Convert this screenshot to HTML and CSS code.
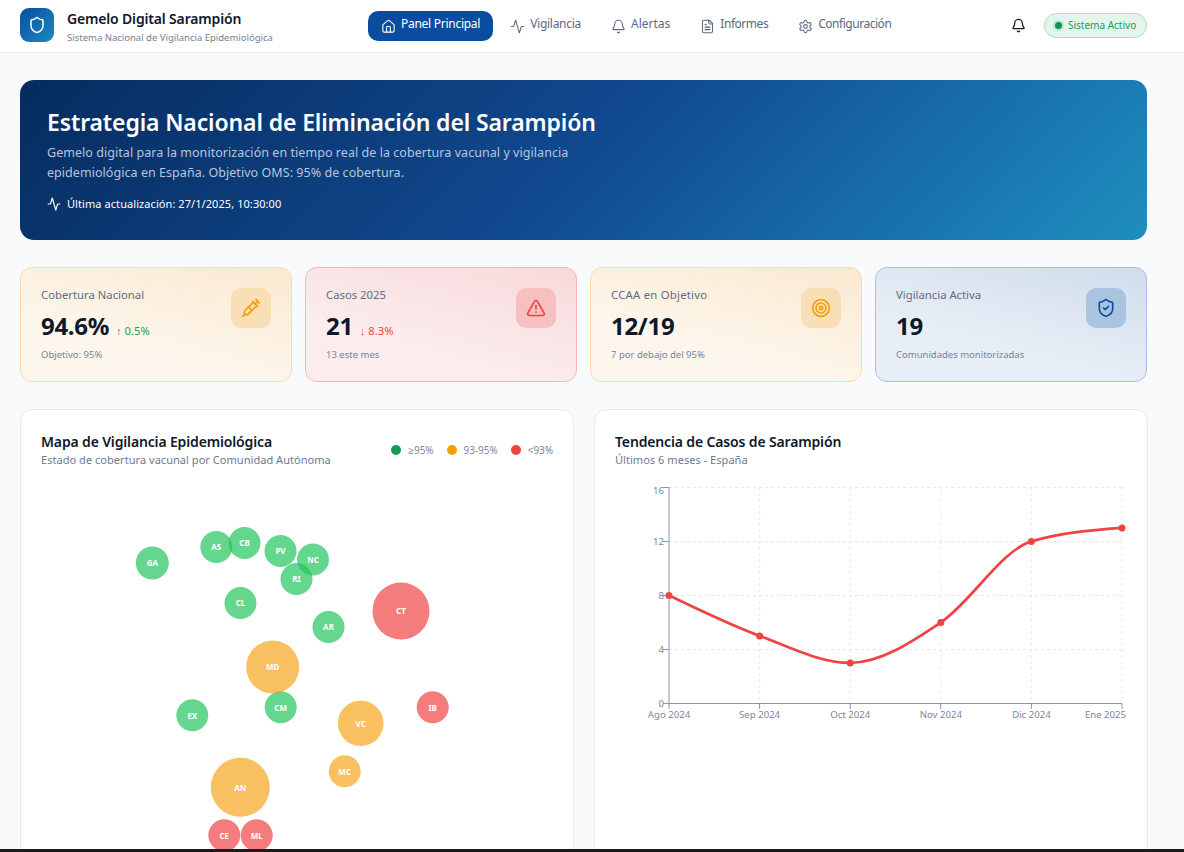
FILE: index.html
```html
<!DOCTYPE html>
<html lang="es">
<head>
<meta charset="utf-8">
<title>Gemelo Digital Sarampión</title>
<link rel="stylesheet" href="styles.css">
</head>
<body>
<div class="app">
  <header class="topbar">
    <div class="brand">
      <div class="logo">
        <svg class="ico ico-18" viewBox="0 0 24 24"><path d="M20 13c0 5-3.5 7.5-7.66 8.95a1 1 0 0 1-.67-.01C7.5 20.5 4 18 4 13V6a1 1 0 0 1 1-1c2 0 4.5-1.2 6.24-2.72a1.17 1.17 0 0 1 1.52 0C14.51 3.81 17 5 19 5a1 1 0 0 1 1 1z"/></svg>
      </div>
      <div class="brand-text">
        <div class="brand-title">Gemelo Digital Sarampión</div>
        <div class="brand-sub">Sistema Nacional de Vigilancia Epidemiológica</div>
      </div>
    </div>
    <nav class="nav">
      <a class="nav-item active">
        <svg class="ico ico-15" viewBox="0 0 24 24"><path d="M15 21v-8a1 1 0 0 0-1-1h-4a1 1 0 0 0-1 1v8"/><path d="M3 10a2 2 0 0 1 .709-1.528l7-5.999a2 2 0 0 1 2.582 0l7 5.999A2 2 0 0 1 21 10v9a2 2 0 0 1-2 2H5a2 2 0 0 1-2-2z"/></svg>
        <span>Panel Principal</span>
      </a>
      <a class="nav-item">
        <svg class="ico ico-15" viewBox="0 0 24 24"><path d="M22 12h-2.48a2 2 0 0 0-1.93 1.46l-2.35 8.36a.25.25 0 0 1-.48 0L9.24 2.18a.25.25 0 0 0-.48 0l-2.35 8.36A2 2 0 0 1 4.49 12H2"/></svg>
        <span>Vigilancia</span>
      </a>
      <a class="nav-item nav-wide">
        <svg class="ico ico-15" viewBox="0 0 24 24"><path d="M10.268 21a2 2 0 0 0 3.464 0"/><path d="M3.262 15.326A1 1 0 0 0 4 17h16a1 1 0 0 0 .74-1.673C19.41 13.956 18 12.499 18 8A6 6 0 0 0 6 8c0 4.499-1.411 5.956-2.738 7.326"/></svg>
        <span>Alertas</span>
      </a>
      <a class="nav-item nav-tight">
        <svg class="ico ico-15" viewBox="0 0 24 24"><path d="M15 2H6a2 2 0 0 0-2 2v16a2 2 0 0 0 2 2h12a2 2 0 0 0 2-2V7Z"/><path d="M14 2v4a2 2 0 0 0 2 2h4"/><path d="M10 9H8"/><path d="M16 13H8"/><path d="M16 17H8"/></svg>
        <span>Informes</span>
      </a>
      <a class="nav-item nav-tight">
        <svg class="ico ico-15" viewBox="0 0 24 24"><path d="M12.22 2h-.44a2 2 0 0 0-2 2v.18a2 2 0 0 1-1 1.73l-.43.25a2 2 0 0 1-2 0l-.15-.08a2 2 0 0 0-2.73.73l-.22.38a2 2 0 0 0 .73 2.73l.15.1a2 2 0 0 1 1 1.72v.51a2 2 0 0 1-1 1.74l-.15.09a2 2 0 0 0-.73 2.73l.22.38a2 2 0 0 0 2.73.73l.15-.08a2 2 0 0 1 2 0l.43.25a2 2 0 0 1 1 1.73V20a2 2 0 0 0 2 2h.44a2 2 0 0 0 2-2v-.18a2 2 0 0 1 1-1.73l.43-.25a2 2 0 0 1 2 0l.15.08a2 2 0 0 0 2.73-.73l.22-.39a2 2 0 0 0-.73-2.73l-.15-.08a2 2 0 0 1-1-1.74v-.5a2 2 0 0 1 1-1.74l.15-.09a2 2 0 0 0 .73-2.73l-.22-.38a2 2 0 0 0-2.73-.73l-.15.08a2 2 0 0 1-2 0l-.43-.25a2 2 0 0 1-1-1.73V4a2 2 0 0 0-2-2z"/><circle cx="12" cy="12" r="3"/></svg>
        <span>Configuración</span>
      </a>
    </nav>
    <div class="top-actions">
      <svg class="ico ico-15 bell" viewBox="0 0 24 24"><path d="M10.268 21a2 2 0 0 0 3.464 0"/><path d="M3.262 15.326A1 1 0 0 0 4 17h16a1 1 0 0 0 .74-1.673C19.41 13.956 18 12.499 18 8A6 6 0 0 0 6 8c0 4.499-1.411 5.956-2.738 7.326"/></svg>
      <div class="status"><span class="status-dot"></span><span>Sistema Activo</span></div>
    </div>
  </header>

  <main class="main">
    <section class="hero">
      <h1 class="hero-title">Estrategia Nacional de Eliminación del Sarampión</h1>
      <p class="hero-text">Gemelo digital para la monitorización en tiempo real de la cobertura vacunal y vigilancia epidemiológica en España. Objetivo OMS: 95% de cobertura.</p>
      <div class="hero-update">
        <svg class="ico ico-14" viewBox="0 0 24 24"><path d="M22 12h-2.48a2 2 0 0 0-1.93 1.46l-2.35 8.36a.25.25 0 0 1-.48 0L9.24 2.18a.25.25 0 0 0-.48 0l-2.35 8.36A2 2 0 0 1 4.49 12H2"/></svg>
        <span>Última actualización: 27/1/2025, 10:30:00</span>
      </div>
    </section>

    <section class="stats">
      <article class="stat stat-orange">
        <div class="stat-body">
          <div class="stat-label">Cobertura Nacional</div>
          <div class="stat-value-row"><span class="stat-value">94.6%</span><span class="delta delta-up">↑ 0.5%</span></div>
          <div class="stat-note">Objetivo: 95%</div>
        </div>
        <div class="stat-icon"><svg class="ico ico-20" viewBox="0 0 24 24"><path d="m18 2 4 4"/><path d="m17 7 3-3"/><path d="M19 9 8.7 19.3c-1 1-2.5 1-3.4 0l-.6-.6c-1-1-1-2.5 0-3.4L15 5"/><path d="m9 11 4 4"/><path d="m5 19-3 3"/><path d="m14 4 6 6"/></svg></div>
      </article>
      <article class="stat stat-red">
        <div class="stat-body">
          <div class="stat-label">Casos 2025</div>
          <div class="stat-value-row"><span class="stat-value">21</span><span class="delta delta-down">↓ 8.3%</span></div>
          <div class="stat-note">13 este mes</div>
        </div>
        <div class="stat-icon"><svg class="ico ico-20" viewBox="0 0 24 24"><path d="m21.73 18-8-14a2 2 0 0 0-3.48 0l-8 14A2 2 0 0 0 4 21h16a2 2 0 0 0 1.73-3"/><path d="M12 9v4"/><path d="M12 17h.01"/></svg></div>
      </article>
      <article class="stat stat-orange">
        <div class="stat-body">
          <div class="stat-label stat-label-wide">CCAA en Objetivo</div>
          <div class="stat-value-row"><span class="stat-value">12/19</span></div>
          <div class="stat-note">7 por debajo del 95%</div>
        </div>
        <div class="stat-icon"><svg class="ico ico-20" viewBox="0 0 24 24"><circle cx="12" cy="12" r="10"/><circle cx="12" cy="12" r="6"/><circle cx="12" cy="12" r="2"/></svg></div>
      </article>
      <article class="stat stat-blue">
        <div class="stat-body">
          <div class="stat-label">Vigilancia Activa</div>
          <div class="stat-value-row"><span class="stat-value">19</span></div>
          <div class="stat-note">Comunidades monitorizadas</div>
        </div>
        <div class="stat-icon"><svg class="ico ico-20" viewBox="0 0 24 24"><path d="M20 13c0 5-3.5 7.5-7.66 8.95a1 1 0 0 1-.67-.01C7.5 20.5 4 18 4 13V6a1 1 0 0 1 1-1c2 0 4.5-1.2 6.24-2.72a1.17 1.17 0 0 1 1.52 0C14.51 3.81 17 5 19 5a1 1 0 0 1 1 1z"/><path d="m9 12 2 2 4-4"/></svg></div>
      </article>
    </section>

    <section class="panels">
      <article class="panel">
        <div class="panel-head">
          <div>
            <h2 class="panel-title">Mapa de Vigilancia Epidemiológica</h2>
            <p class="panel-sub">Estado de cobertura vacunal por Comunidad Autónoma</p>
          </div>
          <div class="legend">
            <span class="legend-item"><i class="dot dot-green"></i>≥95%</span>
            <span class="legend-item"><i class="dot dot-orange"></i>93-95%</span>
            <span class="legend-item"><i class="dot dot-red"></i>&lt;93%</span>
          </div>
        </div>
        <svg class="map" viewBox="41 480 512 380" width="512" height="380">
          <g class="b-green">
            <circle cx="152.3" cy="563" r="16.5"/><circle cx="216.3" cy="547" r="16"/><circle cx="244.5" cy="543" r="16"/><circle cx="280.5" cy="551" r="16"/><circle cx="313" cy="559.5" r="16"/><circle cx="296.5" cy="579" r="16"/><circle cx="240.5" cy="603" r="16"/><circle cx="328.5" cy="627" r="16"/><circle cx="280.7" cy="707.3" r="16"/><circle cx="192.3" cy="715.3" r="16"/>
          </g>
          <g class="b-orange">
            <circle cx="272.7" cy="667" r="26.5"/><circle cx="360.7" cy="723.3" r="22.8"/><circle cx="344.7" cy="771.3" r="16"/><circle cx="240.3" cy="787.3" r="29.5"/>
          </g>
          <g class="b-red">
            <circle cx="401" cy="611" r="28.5"/><circle cx="432.7" cy="707.3" r="16"/><circle cx="224.3" cy="835.3" r="16"/><circle cx="256.7" cy="835.3" r="16"/>
          </g>
          <g class="b-labels">
            <text x="152.3" y="566">GA</text><text x="216.3" y="550">AS</text><text x="244.5" y="546">CB</text><text x="280.5" y="554">PV</text><text x="313" y="562.5">NC</text><text x="296.5" y="582">RI</text><text x="240.5" y="606">CL</text><text x="328.5" y="630">AR</text><text x="401" y="614">CT</text><text x="272.7" y="670">MD</text><text x="280.7" y="711">CM</text><text x="192.3" y="719">EX</text><text x="360.7" y="727">VC</text><text x="432.7" y="711">IB</text><text x="344.7" y="775">MC</text><text x="240.3" y="791">AN</text><text x="224.3" y="839">CE</text><text x="256.7" y="839">ML</text>
          </g>
        </svg>
      </article>
      <article class="panel">
        <div class="panel-head">
          <div>
            <h2 class="panel-title">Tendencia de Casos de Sarampión</h2>
            <p class="panel-sub">Últimos 6 meses - España</p>
          </div>
        </div>
        <svg class="chart" viewBox="615 480 512 380" width="512" height="380">
          <g class="grid">
            <path d="M669 487.5H1122M669 541.5H1122M669 595.5H1122M669 649.5H1122"/>
            <path d="M759.6 487V703M850.2 487V703M940.8 487V703M1031.4 487V703M1122 487V703"/>
          </g>
          <g class="axis">
            <path d="M669 487V703.5H1122"/>
            <path d="M663 487.5H669M663 541.5H669M663 595.5H669M663 649.5H669M663 703.5H669"/>
            <path d="M669 703.5V709M759.6 703.5V709M850.2 703.5V709M940.8 703.5V709M1031.4 703.5V709M1122 703.5V709"/>
          </g>
          <g class="tick-y">
            <text x="664" y="494">16</text><text x="664" y="545">12</text><text x="664" y="599">8</text><text x="664" y="653">4</text><text x="664" y="707">0</text>
          </g>
          <g class="tick-x">
            <text x="669" y="718">Ago 2024</text><text x="759.6" y="718">Sep 2024</text><text x="850.2" y="718">Oct 2024</text><text x="940.8" y="718">Nov 2024</text><text x="1031.4" y="718">Dic 2024</text><text class="tick-end" x="1126" y="718">Ene 2025</text>
          </g>
          <path class="line" transform="translate(0 .4)" d="M669 595C699.2 609.6 729.4 624.25 759.6 635.5C789.8 646.75 820 662.5 850.2 662.5C880.4 662.5 910.6 642.23 940.8 622C971 601.77 1001.2 550 1031.4 541C1061.6 532 1091.8 529.75 1122 527.5"/>
          <g class="points" transform="translate(0 .4)">
            <circle cx="669" cy="595" r="3.5"/><circle cx="759.6" cy="635.5" r="3.5"/><circle cx="850.2" cy="662.5" r="3.5"/><circle cx="940.8" cy="622" r="3.5"/><circle cx="1031.4" cy="541" r="3.5"/><circle cx="1122" cy="527.5" r="3.5"/>
          </g>
        </svg>
      </article>
    </section>
  </main>
  <div class="edge"></div>
</div>
</body>
</html>
```

FILE: styles.css
```css
* { box-sizing: border-box; }
html, body { margin: 0; height: 100%; }
body {
  font-family: "Noto Sans", "Open Sans", sans-serif;
  color: #0f172a;
  background: #f8fafc;
  overflow: hidden;
}
h1, h2, p { margin: 0; }

.ico {
  fill: none;
  stroke: currentColor;
  stroke-width: 2;
  stroke-linecap: round;
  stroke-linejoin: round;
  flex: none;
  display: block;
}
.ico-14 { width: 14px; height: 14px; }
.ico-15 { width: 15px; height: 15px; stroke-width: 1.7; }
.ico-18 { width: 18px; height: 18px; }
.ico-20 { width: 20px; height: 20px; }

.app { height: 100vh; display: flex; flex-direction: column; overflow: hidden; }
.edge { height: 3px; flex: none; background: #1a1a1a; }

.topbar {
  height: 53px;
  flex: none;
  background: #fff;
  border-bottom: 1px solid #e6e9ef;
  padding: 0 37px 0 20px;
  display: flex;
  align-items: center;
}
.brand { width: 348px; display: flex; align-items: center; gap: 13px; margin-top: -2px; }
.logo {
  width: 34px; height: 34px;
  border-radius: 9px;
  background: linear-gradient(135deg, #0a4d9e, #1a8ac2);
  color: #fff;
  display: flex; align-items: center; justify-content: center;
}
.brand-text { padding-top: 4px; }
.brand-title { font-size: 14px; font-weight: 600; line-height: 20px; letter-spacing: -0.17px; }
.brand-sub { font-size: 9.5px; color: #748094; line-height: 14px; margin-top: 2px; }

.nav { display: flex; gap: 4px; }
.nav-item {
  height: 30px;
  padding: 0 13px;
  border-radius: 10px;
  display: flex; align-items: center; gap: 5px;
  font-size: 12px;
  letter-spacing: -0.27px;
  color: #5c6980;
}
.nav-item span { margin-top: -6px; }
.nav-item.active { background: #0a4d9e; color: #fff; }
.nav-wide { letter-spacing: 0; }
.nav-tight { letter-spacing: -0.47px; }

.top-actions { margin-left: auto; display: flex; align-items: center; gap: 18px; margin-top: -2px; }
.bell { color: #0f172a; stroke-width: 2; }
.status {
  width: 103px; height: 25px;
  border: 1px solid #aedcc4;
  border-radius: 13px;
  background: #e4f5ec;
  color: #16a05a;
  font-size: 10px;
  display: flex; align-items: center; gap: 6px;
  padding-left: 10px;
}
.status-dot {
  width: 7px; height: 7px; border-radius: 50%;
  background: #15935a;
  box-shadow: 0 0 0 2px #bfe7d2;
}

.main { flex: 1; min-height: 0; padding: 27px 37px 0 20px; overflow: hidden; }

.hero {
  height: 160px;
  border-radius: 14px;
  padding: 26px 27px;
  color: #fff;
  background: linear-gradient(135deg, #062c5f 0%, #11498f 50%, #1e8fbf 100%);
}
.hero-title { font-size: 23px; font-weight: 600; line-height: 32px; letter-spacing: -0.125px; }
.hero-text { font-size: 12.5px; line-height: 20px; letter-spacing: 0.05px; color: #b7c6da; width: 560px; margin-top: 5px; }
.hero-update { display: flex; align-items: center; gap: 6px; margin-top: 13px; font-size: 11px; line-height: 16px; letter-spacing: 0.07px; }

.stats { display: grid; grid-template-columns: repeat(4, 1fr); gap: 13px; margin-top: 27px; }
.stat {
  height: 115px;
  border: 1px solid;
  border-radius: 12px;
  padding: 19px 20px;
  display: flex; justify-content: space-between;
}
.stat-orange { background: linear-gradient(195deg, #fae9d0 0%, #fdf6ec 65%); border-color: #f9dcab; }
.stat-red { background: linear-gradient(195deg, #f8d9db 0%, #fbeced 65%); border-color: #f4b6b9; }
.stat-blue { background: linear-gradient(195deg, #d0ddec 0%, #e8eef6 65%); border-color: #a7c1de; }
.stat-label { font-size: 11.3px; line-height: 15px; color: #5f6c82; }
.stat-label-wide { letter-spacing: 0.25px; }
.stat-value-row { display: flex; align-items: baseline; gap: 7px; margin-top: 8px; }
.stat-value { font-size: 24px; font-weight: 700; line-height: 32px; letter-spacing: -0.3px; }
.delta { font-size: 11.2px; }
.delta-up { color: #16a05a; }
.delta-down { color: #ef4444; }
.stat-note { font-size: 9.5px; line-height: 14px; color: #77839a; margin-top: 6px; }
.stat-icon {
  width: 40px; height: 40px;
  margin-top: 1px;
  border-radius: 10px;
  display: flex; align-items: center; justify-content: center;
}
.stat-orange .stat-icon { background: #f8dfb5; color: #f59e0b; }
.stat-red .stat-icon { background: #f6bfc1; color: #ef4444; }
.stat-blue .stat-icon { background: #aac4e0; color: #0a4d9e; }

.panels { display: grid; grid-template-columns: 1fr 1fr; gap: 20px; margin-top: 27px; }
.panel {
  height: 470px;
  background: #fff;
  border: 1px solid #e6e9ef;
  border-radius: 12px;
  padding: 20px;
}
.panel-head { display: flex; justify-content: space-between; height: 50px; }
.panel-title { font-size: 14px; font-weight: 600; line-height: 22px; letter-spacing: -0.15px; margin-top: 1px; }
.panel-sub { font-size: 11px; letter-spacing: 0.04px; line-height: 14px; color: #6d7a90; }
.legend { display: flex; gap: 13px; align-items: center; height: 40px; font-size: 10px; letter-spacing: -0.05px; color: #7a869a; }
.legend-item { display: flex; align-items: center; gap: 7px; }
.dot { width: 10px; height: 10px; border-radius: 50%; display: block; }
.dot-green { background: #15995c; }
.dot-orange { background: #f59e0b; }
.dot-red { background: #ef4444; }

.map, .chart { display: block; }
.b-green circle { fill: #22c55e; fill-opacity: .7; }
.b-orange circle { fill: #f59e0b; fill-opacity: .65; }
.b-red circle { fill: #ef4444; fill-opacity: .7; }
.b-labels text { fill: #fff; font-size: 8px; font-weight: 700; text-anchor: middle; }

.grid path { fill: none; stroke: #e2e8f0; stroke-dasharray: 3 3; }
.axis path { fill: none; stroke: #8a94a8; }
.tick-y text, .tick-x text { fill: #7a869a; font-size: 9.6px; }
.tick-y text { text-anchor: end; }
.tick-x text { text-anchor: middle; }
.tick-x .tick-end { text-anchor: end; }
.line { fill: none; stroke: #ef4444; stroke-width: 2.7; }
.points circle { fill: #ef4444; }
```
